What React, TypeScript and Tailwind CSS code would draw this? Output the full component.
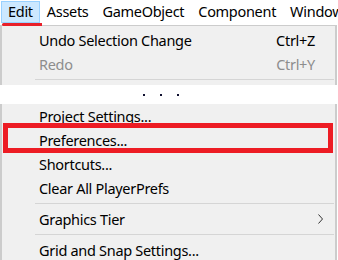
import React from "react";

const font = { fontFamily: '"Noto Sans", "Open Sans", sans-serif' };

function Row({ label, shortcut, disabled, sub }: { label: string; shortcut?: string; disabled?: boolean; sub?: boolean }) {
  return (
    <div className={`h-[24px] flex items-center pl-[37px] pr-[20px] text-[14.5px] tracking-[-0.3px] leading-[24px] ${disabled ? "text-[#8d8d8d]" : "text-black"}`}>
      <span className="flex-1 whitespace-nowrap">{label}</span>
      {shortcut && <span className="whitespace-nowrap">{shortcut}</span>}
      {sub && (
        <svg width="6" height="10" viewBox="0 0 6 10" className="mr-[-9px]">
          <path d="M0.5 0.5 L4.5 5 L0.5 9.5" fill="none" stroke="#333" strokeWidth="1" />
        </svg>
      )}
    </div>
  );
}

function Sep() {
  return <div className="ml-[33px] mr-[1px] my-[3px] h-px bg-[#d5d5d5]" />;
}

export default function App() {
  return (
    <div className="w-[338px] h-[260px] bg-white overflow-hidden relative" style={font}>
      <div className="h-[25px] flex items-start text-[14.5px] tracking-[-0.3px] text-black pt-[1px] whitespace-nowrap">
        <div className="ml-[1px] h-[22px] px-[6px] bg-[#cce8ff] border border-[#99d1ff] flex items-center">Edit</div>
        <div className="h-[22px] flex items-center px-[7px]">Assets</div>
        <div className="h-[22px] flex items-center px-[7px]">GameObject</div>
        <div className="h-[22px] flex items-center px-[7px]">Component</div>
        <div className="h-[22px] flex items-center px-[7px]">Window</div>
      </div>
      <div className="border-t border-l-2 border-r-2 border-[#cccccc] bg-[#f0f0f0] pt-[2px] pb-[2px] w-[337px]">
        <Row label="Undo Selection Change" shortcut="Ctrl+Z" />
        <Row label="Redo" shortcut="Ctrl+Y" disabled />
        <Sep />
      </div>
      <div className="h-[19px] bg-white flex items-center pl-[143px] gap-[15px]">
        <span className="w-[2px] h-[2px] bg-[#101030]" />
        <span className="w-[2px] h-[2px] bg-[#101030]" />
        <span className="w-[2px] h-[2px] bg-[#101030]" />
      </div>
      <div className="border-l-2 border-r-2 border-[#cccccc] bg-[#f0f0f0] w-[337px] h-[200px]">
        <Row label="Project Settings..." />
        <Row label="Preferences..." />
        <Row label="Shortcuts..." />
        <Row label="Clear All PlayerPrefs" />
        <Sep />
        <Row label="Graphics Tier" sub />
        <Sep />
        <Row label="Grid and Snap Settings..." />
      </div>
      <div className="absolute left-[2px] top-[23px] w-[40px] h-[3px] bg-[#e8202a] rounded-l-full" />
      <div className="absolute left-[3px] top-[123px] w-[330px] h-[30px] border-[5px] border-[#ed1c24]" />
    </div>
  );
}
